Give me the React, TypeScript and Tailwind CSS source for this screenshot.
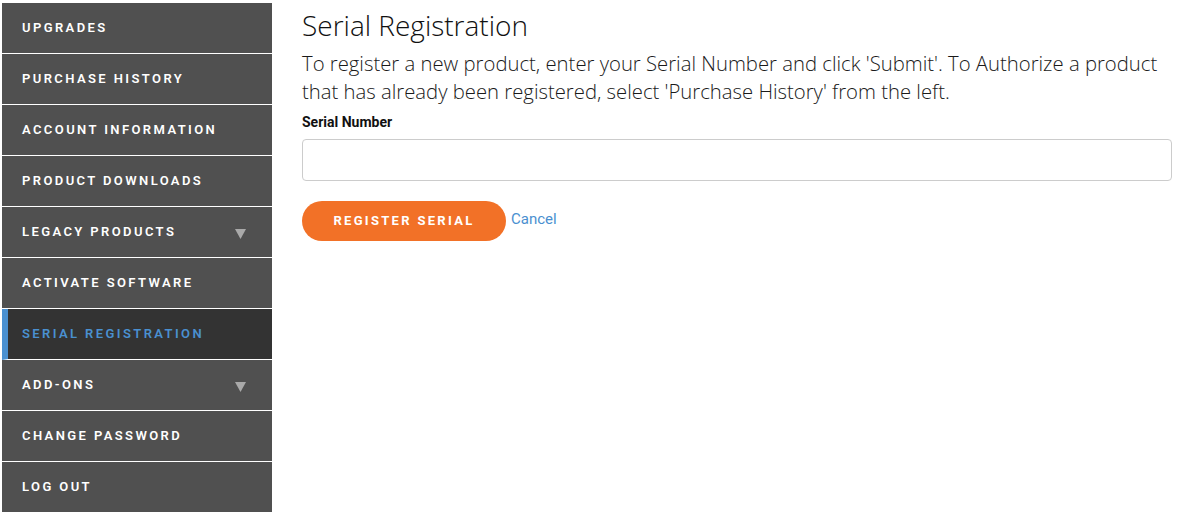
const items = [
  { label: "Upgrades" },
  { label: "Purchase History" },
  { label: "Account Information" },
  { label: "Product Downloads" },
  { label: "Legacy Products", caret: true },
  { label: "Activate Software" },
  { label: "Serial Registration", active: true },
  { label: "Add-Ons", caret: true },
  { label: "Change Password" },
  { label: "Log Out" },
];

function Caret() {
  return (
    <svg width="11" height="10" viewBox="0 0 11 10" className="mt-[4px]">
      <path d="M0 0 H11 L5.5 10 Z" fill="#a9a9a9" />
    </svg>
  );
}

export default function App() {
  return (
    <div className="flex min-h-[517px] items-start bg-white pt-[3px] pl-[2px]">
      <nav className="w-[270px] shrink-0 bg-[#505050]">
        {items.map((item) => (
          <div
            key={item.label}
            className={`flex h-[51px] items-center justify-between border-b border-white pr-[26px] last:h-[50px] last:border-b-0 ${
              item.active ? "bg-[#333333] border-l-[6px] border-l-[#4a90d0] pl-[14px]" : "pl-[20px]"
            }`}
          >
            <span
              className={`font-['Roboto',sans-serif] text-[13px] font-semibold uppercase tracking-[2.4px] ${
                item.active ? "text-[#4a90d0]" : "text-white"
              }`}
            >
              {item.label}
            </span>
            {item.caret && <Caret />}
          </div>
        ))}
      </nav>

      <main className="flex-1 pl-[30px] pr-[6px]">
        <h1 className="font-['Open_Sans',sans-serif] text-[28px] font-light leading-[44px] text-[#111]">
          Serial Registration
        </h1>
        <p className="mt-[2px] font-['Open_Sans',sans-serif] text-[20.3px] font-light leading-[28px] text-[#1a1a1a]">
          To register a new product, enter your Serial Number and click 'Submit'. To Authorize a product that has
          already been registered, select 'Purchase History' from the left.
        </p>
        <label className="mt-[8px] block font-['Roboto',sans-serif] text-[14px] font-bold leading-[18px] text-[#111]">
          Serial Number
        </label>
        <input
          type="text"
          className="mt-[8px] block h-[42px] w-full rounded-[4px] border border-[#cccccc] bg-white px-3 font-['Roboto',sans-serif] text-[14px] outline-none"
        />
        <div className="mt-[20px] flex items-start gap-[5px]">
          <button className="h-[40px] w-[204px] rounded-full bg-[#f27127] font-['Roboto',sans-serif] text-[13px] font-bold uppercase tracking-[2.3px] text-white">
            Register Serial
          </button>
          <a href="#" className="mt-[7px] font-['Roboto',sans-serif] text-[15px] text-[#4a90d0]">
            Cancel
          </a>
        </div>
      </main>
    </div>
  );
}
